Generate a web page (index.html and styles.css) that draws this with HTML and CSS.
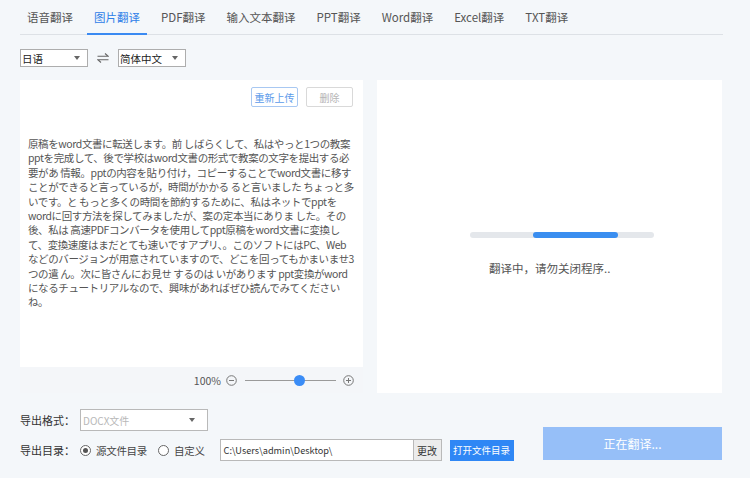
FILE: index.html
```html
<!DOCTYPE html>
<html lang="zh-CN">
<head>
<meta charset="utf-8">
<title>图片翻译</title>
<link rel="stylesheet" href="styles.css">
</head>
<body>
<div class="app">
  <nav class="tabs">
    <a class="tab">语音翻译</a>
    <a class="tab active">图片翻译</a>
    <a class="tab">PDF翻译</a>
    <a class="tab">输入文本翻译</a>
    <a class="tab">PPT翻译</a>
    <a class="tab">Word翻译</a>
    <a class="tab">Excel翻译</a>
    <a class="tab">TXT翻译</a>
  </nav>

  <div class="lang-row">
    <div class="select lang"><span>日语</span><i class="caret"></i></div>
    <svg class="swap" width="12" height="10" viewBox="0 0 12 10" aria-hidden="true">
      <path d="M0.5 3.2 H11 L8 0.5" fill="none" stroke="#666" stroke-width="1.1"/>
      <path d="M11.5 6.8 H1 L4 9.5" fill="none" stroke="#666" stroke-width="1.1"/>
    </svg>
    <div class="select lang"><span>简体中文</span><i class="caret"></i></div>
  </div>

  <div class="workspace">
    <section class="panel source">
      <div class="toolbar">
        <button class="btn btn-reupload">重新上传</button>
        <button class="btn btn-delete">删除</button>
      </div>
      <p class="doc">原稿をword文書に転送します。前 しばらくして、私はやっと1つの教案<br>pptを完成して、後で学校はword文書の形式で教案の文字を提出する必<br>要があ 情報。pptの内容を貼り付け，コピーすることでword文書に移す<br>ことができると言っているが，時間がかかる ると言いました ちょっと多<br>いです。と もっと多くの時間を節約するために、私はネットでpptを<br>wordに回す方法を探してみましたが、案の定本当にありま した。その<br>後、私は 高速PDFコンバータを使用してppt原稿をword文書に変換し<br>て、変換速度はまだとても速いですアプリ、。このソフトにはPC、Web<br>などのバージョンが用意されていますので、どこを回ってもかまいませ3<br>つの遣 ん。次に皆さんにお見せ するのは いがあります ppt変換がword<br>になるチュートリアルなので、興味があればぜひ読んでみてください<br>ね。</p>
      <div class="zoombar">
        <span class="zoom-val">100%</span>
        <svg class="zoom-ico" width="11" height="11" viewBox="0 0 11 11" aria-hidden="true">
          <circle cx="5.5" cy="5.5" r="4.8" fill="none" stroke="#777" stroke-width="1"/>
          <path d="M3 5.5 H8" stroke="#777" stroke-width="1"/>
        </svg>
        <div class="slider"><span class="knob"></span></div>
        <svg class="zoom-ico" width="11" height="11" viewBox="0 0 11 11" aria-hidden="true">
          <circle cx="5.5" cy="5.5" r="4.8" fill="none" stroke="#777" stroke-width="1"/>
          <path d="M3 5.5 H8 M5.5 3 V8" stroke="#777" stroke-width="1"/>
        </svg>
      </div>
    </section>

    <section class="panel result">
      <div class="progress"><div class="progress-fill"></div></div>
      <p class="status">翻译中，请勿关闭程序..</p>
    </section>
  </div>

  <div class="footer">
    <div class="options">
      <div class="opt-row">
        <span class="opt-label">导出格式：</span>
        <div class="select format"><span>DOCX文件</span><i class="caret"></i></div>
      </div>
      <div class="opt-row">
        <span class="opt-label">导出目录：</span>
        <label class="radio checked"><i class="dot"></i>源文件目录</label>
        <label class="radio"><i class="dot"></i>自定义</label>
        <div class="path">
          <span class="path-text">C:\Users\admin\Desktop\</span>
          <button class="path-btn">更改</button>
        </div>
        <button class="open-btn">打开文件目录</button>
      </div>
    </div>
    <button class="translate-btn">正在翻译...</button>
  </div>
</div>
</body>
</html>
```

FILE: styles.css
```css
* { box-sizing: border-box; }

html, body {
  margin: 0;
  padding: 0;
}

body {
  width: 750px;
  height: 478px;
  overflow: hidden;
  background: #f4f7fa;
  font-family: "Noto Sans CJK SC", "Noto Sans", sans-serif;
  color: #555;
}

.app {
  display: flex;
  flex-direction: column;
}

/* Tabs */
.tabs {
  display: flex;
  gap: 7px;
  margin: 0 27px 0 20px;
  height: 35px;
  border-bottom: 1px solid #dde1e6;
}

.tab {
  height: 35px;
  padding: 0 7px;
  line-height: 34px;
  font-size: 11.5px;
  color: #555;
  white-space: nowrap;
  border-bottom: 2px solid transparent;
  margin-bottom: -1px;
}

.tab.active {
  color: #2f80e8;
  border-bottom-color: #3a8af2;
}

/* language row */
.lang-row {
  display: flex;
  align-items: center;
  gap: 9px;
  padding: 14px 20px 0;
  height: 32px;
}

.select {
  display: flex;
  align-items: center;
  justify-content: space-between;
  background: #fff;
  border: 1px solid #adadad;
}

.select.lang {
  width: 68px;
  height: 18px;
  padding: 0 7px 0 1px;
  font-size: 10.5px;
  color: #222;
}

.caret {
  width: 0;
  height: 0;
  border-left: 3.5px solid transparent;
  border-right: 3.5px solid transparent;
  border-top: 4px solid #666;
}

.swap { display: block; }

/* workspace */
.workspace {
  display: flex;
  gap: 14px;
  margin: 13px 28px 0 20px;
  height: 313px;
}

.panel {
  background: #fff;
}

.panel.source {
  width: 343px;
  display: flex;
  flex-direction: column;
}

.panel.result {
  flex: 1;
  padding-top: 152px;
}

.toolbar {
  display: flex;
  justify-content: flex-end;
  gap: 8px;
  padding: 7px 10px 0;
}

.btn {
  width: 47px;
  height: 20px;
  padding: 0;
  background: #fff;
  font-family: inherit;
  font-size: 10px;
  border-radius: 2px;
}

.btn-reupload {
  border: 1px solid #a8c8f2;
  color: #5b9bea;
}

.btn-delete {
  border: 1px solid #d9d9d9;
  color: #b5b5b5;
}

.doc {
  flex: 1;
  margin: 30px 0 0;
  padding: 0 0 0 8px;
  font-size: 10.5px;
  line-height: 14.4px;
  letter-spacing: -0.4px;
  color: #555;
  white-space: nowrap;
}

.zoombar {
  height: 26px;
  display: flex;
  align-items: center;
  justify-content: flex-end;
  padding-right: 9px;
  background: #f4f6f9;
}

.zoom-val {
  font-size: 10.5px;
  color: #555;
  margin-right: 5px;
}

.zoom-ico { display: block; }

.slider {
  position: relative;
  width: 91px;
  height: 1px;
  background: #9a9a9a;
  margin: 0 7px 0 8px;
}

.knob {
  position: absolute;
  left: 49px;
  top: -5px;
  width: 11px;
  height: 11px;
  border-radius: 50%;
  background: #3a8cf6;
}

/* result panel */
.progress {
  width: 184px;
  height: 6px;
  margin-left: 93px;
  border-radius: 3px;
  background: #e4e7eb;
  position: relative;
}

.progress-fill {
  position: absolute;
  left: 63px;
  top: 0;
  width: 85px;
  height: 6px;
  border-radius: 3px;
  background: #3a8ef0;
}

.status {
  margin: 22px 0 0 112px;
  font-size: 11.5px;
  color: #555;
}

/* footer */
.footer {
  display: flex;
  justify-content: space-between;
  align-items: flex-end;
  margin: 16px 28px 0 20px;
}

.options {
  display: flex;
  flex-direction: column;
  gap: 8px;
}

.opt-row {
  display: flex;
  align-items: center;
  height: 22px;
}

.opt-label {
  width: 60px;
  font-size: 11px;
  color: #333;
}

.select.format {
  width: 128px;
  height: 22px;
  padding: 0 12px 0 2px;
  border-color: #b9b9b9;
  font-size: 10px;
  color: #b8b8b8;
}

.radio {
  display: flex;
  align-items: center;
  gap: 5px;
  font-size: 10.5px;
  letter-spacing: -0.3px;
  color: #444;
  margin-right: 11px;
}

.radio .dot {
  width: 11px;
  height: 11px;
  border-radius: 50%;
  border: 1px solid #666;
  background: #fff;
  display: flex;
  align-items: center;
  justify-content: center;
}

.radio.checked .dot::after {
  content: "";
  width: 5px;
  height: 5px;
  border-radius: 50%;
  background: #555;
}

.path {
  display: flex;
  height: 22px;
  margin-left: 4px;
  border: 1px solid #b9b9b9;
  background: #fff;
}

.path-text {
  width: 192px;
  padding-left: 3px;
  line-height: 20px;
  font-size: 9.2px;
  color: #333;
}

.path-btn {
  width: 28px;
  height: 20px;
  padding: 0;
  border: 0;
  border-left: 1px solid #b9b9b9;
  background: #ececec;
  font-family: inherit;
  font-size: 10px;
  color: #333;
}

.open-btn {
  margin-left: 8px;
  width: 64px;
  height: 21px;
  padding: 0;
  border: 0;
  background: #2f87f5;
  color: #fff;
  font-family: inherit;
  font-size: 9.5px;
}

.translate-btn {
  width: 179px;
  height: 33px;
  margin-bottom: 1px;
  border: 0;
  background: #96bff8;
  color: #fff;
  font-family: inherit;
  font-size: 12px;
}
```
